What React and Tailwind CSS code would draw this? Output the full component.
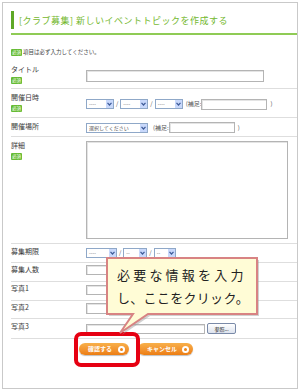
import React from 'react'

const jp = { fontFamily: '"Noto Sans CJK JP", "Noto Sans", sans-serif' }

function Badge() {
  return (
    <span className="inline-flex h-[7px] w-[11px] shrink-0 items-center justify-center rounded-[1px] bg-[#66bb33] text-[4.5px] leading-none text-white">
      必須
    </span>
  )
}

function Select({ w, text = '----' }) {
  return (
    <div className={`flex h-[10px] shrink-0 items-stretch border border-[#8fa8c8] bg-white ${w}`}>
      <span className="flex-1 overflow-hidden whitespace-nowrap pl-[2px] text-[5px] leading-[8px] text-[#555]">{text}</span>
      <span className="flex w-[7px] items-center justify-center bg-[#c8d8fb]">
        <svg width="5" height="4" viewBox="0 0 5 4">
          <path d="M0.5 0.8 L2.5 3 L4.5 0.8" fill="none" stroke="#3d5a98" strokeWidth="1.2" />
        </svg>
      </span>
    </div>
  )
}

function Input({ w, h = 'h-[11px]' }) {
  return <div className={`shrink-0 border border-[#b4b4b4] bg-white shadow-[inset_1px_1px_0_#e4e4e4] ${w} ${h}`} />
}

function Slash() {
  return <span className="shrink-0 px-[2px] text-[6px] leading-none text-[#555]">/</span>
}

function Note({ children, pad }) {
  return <span className={`shrink-0 whitespace-nowrap text-[6px] leading-none text-[#555] ${pad}`}>{children}</span>
}

function Row({ label, required, rowClass, labelClass, contentClass, children }) {
  return (
    <div className={`flex border-b border-[#dedede] ${rowClass}`}>
      <div className={`w-[75px] shrink-0 ${labelClass}`}>
        <div className="text-[7px] leading-[9px] text-[#3a3a3a]">{label}</div>
        {required && (
          <div className="mt-[3px] flex">
            <Badge />
          </div>
        )}
      </div>
      <div className={`flex-1 ${contentClass}`}>{children}</div>
    </div>
  )
}

function OrangeButton({ label, w }) {
  return (
    <div
      className={`flex h-[12px] items-center justify-between rounded-full bg-gradient-to-b from-[#f8b04a] to-[#ec7d10] pl-[9px] pr-[4px] shadow-[0_1px_1px_rgba(0,0,0,0.25)] ${w}`}
    >
      <span className="whitespace-nowrap text-[6px] font-bold leading-none text-white">{label}</span>
      <span className="flex h-[7px] w-[7px] items-center justify-center rounded-full bg-white">
        <span className="h-[3px] w-[3px] rounded-full bg-[#ee8518]" />
      </span>
    </div>
  )
}

export default function App() {
  return (
    <div className="relative h-[392px] w-[300px] overflow-hidden bg-white pt-[2px]" style={jp}>
      <div className="ml-[2px] h-[387px] w-[296px] border border-[#c9c9c9] pl-[8px]">
        {/* heading */}
        <div className="flex items-center pt-[8px]">
          <div className="h-[18px] w-[3px] bg-[#5ea826]" />
          <h1 className="pl-[5px] text-[9px] leading-none tracking-[0.5px] text-[#74b82e]">
            [クラブ募集] 新しいイベントトピックを作成する
          </h1>
        </div>
        <div className="mt-[4px] h-[2px] bg-[#8fcb55]" />

        <div className="mt-[13px] flex h-[9px] items-center gap-[1px]">
          <Badge />
          <span className="text-[5.5px] leading-none text-[#444]">項目は必ず入力してください。</span>
        </div>

        <div className="mt-[5px]">
          <Row label="タイトル" required rowClass="h-[27px]" labelClass="pt-[3px]" contentClass="pt-[8px]">
            <Input w="w-[178px]" h="h-[12px]" />
          </Row>

          <Row label="開催日時" required rowClass="h-[29px]" labelClass="pt-[4px]" contentClass="pt-[9px]">
            <div className="flex h-[12px] items-center">
              <Select w="w-[28px]" />
              <Slash />
              <Select w="w-[28px]" />
              <Slash />
              <Select w="w-[28px]" />
              <Note pad="pl-[3px]">(補足:</Note>
              <Input w="w-[66px]" />
              <Note pad="pl-[3px]">)</Note>
            </div>
          </Row>

          <Row label="開催場所" rowClass="h-[19px]" labelClass="pt-[4px]" contentClass="pt-[4px]">
            <div className="flex h-[11px] items-center">
              <Select w="w-[62px]" text="選択してください" />
              <Note pad="pl-[5px]">(補足:</Note>
              <Input w="w-[66px]" />
              <Note pad="pl-[3px]">)</Note>
            </div>
          </Row>

          <Row label="詳細" required rowClass="h-[107px]" labelClass="pt-[4px]" contentClass="pt-[4px]">
            <Input w="w-[202px]" h="h-[98px]" />
          </Row>

          <Row label="募集期限" rowClass="h-[19px]" labelClass="pt-[3px]" contentClass="pt-[4px]">
            <div className="flex items-center">
              <Select w="w-[31px]" />
              <Slash />
              <Select w="w-[24px]" text="--" />
              <Slash />
              <Select w="w-[22px]" text="--" />
            </div>
          </Row>

          <Row label="募集人数" rowClass="h-[19px]" labelClass="pt-[2px]" contentClass="pt-[2px]">
            <Input w="w-[40px]" h="h-[10px]" />
          </Row>

          <Row label="写真1" rowClass="h-[19px]" labelClass="pt-[2px]" contentClass="pt-[3px]">
            <Input w="w-[119px]" h="h-[10px]" />
          </Row>

          <Row label="写真2" rowClass="h-[18px]" labelClass="pt-[2px]" contentClass="pt-[2px]">
            <Input w="w-[119px]" h="h-[11px]" />
          </Row>

          <Row label="写真3" rowClass="h-[20px]" labelClass="pt-[3px]" contentClass="pt-[4px]">
            <div className="flex items-center gap-[2px]">
              <Input w="w-[119px]" h="h-[10px]" />
              <div className="flex h-[11px] w-[29px] items-center justify-center rounded-[2px] border border-[#7a8aa8] bg-gradient-to-b from-white to-[#dde3ee]">
                <span className="text-[5px] leading-none text-[#222]">参照...</span>
              </div>
            </div>
          </Row>

          <div className="flex gap-[9px] pl-[68px] pt-[4px]">
            <div className="relative">
              <OrangeButton label="確認する" w="w-[50px]" />
              <div className="absolute left-[-5px] top-[-11px] h-[35px] w-[66px] rounded-[7px] border-[4px] border-[#e60012]" />
            </div>
            <OrangeButton label="キャンセル" w="w-[55px]" />
          </div>
        </div>
      </div>

      {/* callout */}
      <div className="absolute left-[100px] top-[250px] h-[90px] w-[165px]">
        <svg width="165" height="90" viewBox="0 0 165 90" className="absolute left-0 top-0">
          <path d="M9,10 H159 V66 H50 L22,85 L35,66 H9 Z" fill="#9a9a9a" opacity="0.45" />
          <path
            d="M7,8 H157 V64 H48 L20,83 L33,64 H7 Z"
            fill="#fffcd6"
            stroke="#d88383"
            strokeWidth="2"
            strokeLinejoin="miter"
          />
        </svg>
        <div className="absolute left-[17px] top-[13px] text-[13px] leading-[23px] text-[#222]">
          <div className="tracking-[3.2px]">必要な情報を入力</div>
          <div className="tracking-[0.3px]">し、ここをクリック。</div>
        </div>
      </div>
    </div>
  )
}
